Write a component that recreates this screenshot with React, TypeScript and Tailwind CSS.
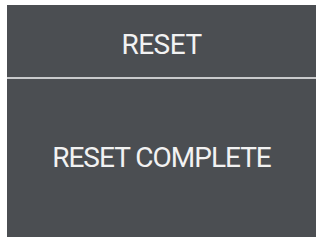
export default function App() {
  return (
    <div className="w-[318px] h-[237px] bg-white pt-[5px] pl-[7px] pr-[2px] overflow-hidden">
      <div className="h-full flex flex-col bg-[#4b4e52] text-[#f2f2f2] font-['Roboto',sans-serif]">
        <div className="h-[72px] flex items-center justify-center pt-[7px]">
          <span className="text-[28px] leading-none tracking-[-0.5px]">RESET</span>
        </div>
        <div className="h-[2px] bg-[#c9cacc]" />
        <div className="flex-1 flex items-center justify-center">
          <span className="text-[28px] leading-none tracking-[-1px]">RESET COMPLETE</span>
        </div>
      </div>
    </div>
  )
}
